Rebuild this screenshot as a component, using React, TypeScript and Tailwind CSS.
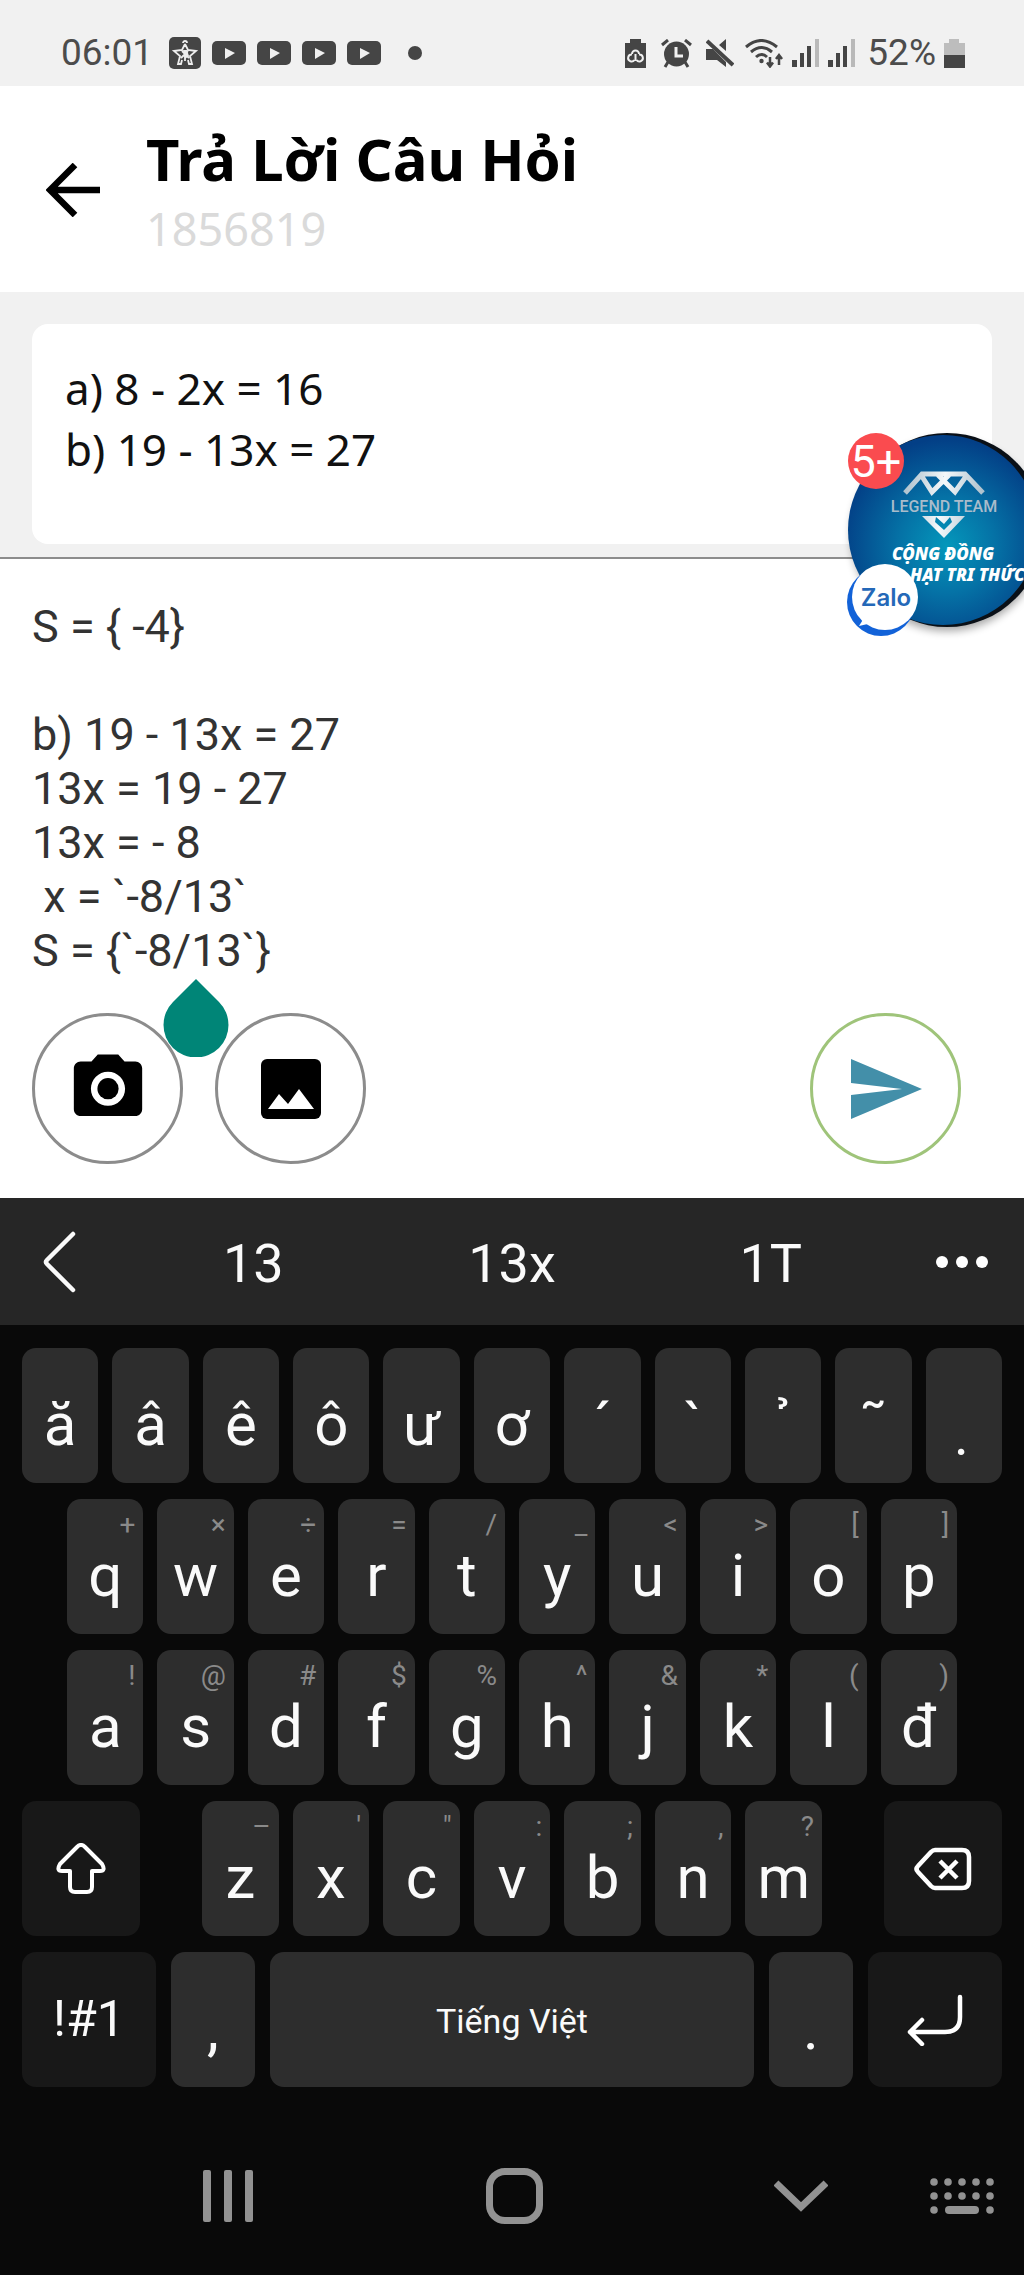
import React from "react";

type KeyDef = { label: string; hint?: string };

const accentKeys: KeyDef[] = [
  { label: "ă" },
  { label: "â" },
  { label: "ê" },
  { label: "ô" },
  { label: "ư" },
  { label: "ơ" },
  { label: "´" },
  { label: "`" },
  { label: "\u00a0\u00a0\u0309" },
  { label: "˜" },
  { label: "\u00a0\u00a0\u0323" },
];

const toKeys = (letters: string, hints: string): KeyDef[] =>
  Array.from(letters).map((label, i) => ({ label, hint: Array.from(hints)[i] }));

const topKeys = toKeys("qwertyuiop", "+×÷=/_<>[]");
const homeKeys = toKeys("asdfghjklđ", "!@#$%^&*()");
const bottomKeys = toKeys("zxcvbnm", "–'\":;,?");

const draft = "S = { -4}\n\nb) 19 - 13x = 27\n13x = 19 - 27\n13x = - 8\n x = `-8/13`\nS = {`-8/13`}";

function Key({ label, hint }: KeyDef) {
  return (
    <button
      type="button"
      className="relative flex h-[135px] min-w-0 flex-1 items-center justify-center rounded-[14px] bg-[#2d2d2d] pt-[18px] text-[60px] leading-none text-[#fafafa]"
    >
      {label}
      {hint && <span className="absolute top-[10px] right-[8px] text-[28px] leading-[32px] text-[#8a8a8a]">{hint}</span>}
    </button>
  );
}

function VideoIcon() {
  return (
    <svg width="34" height="24" viewBox="0 0 34 24" aria-hidden="true">
      <rect width="34" height="24" rx="5" fill="#454545" />
      <path d="M13 7l10 5-10 6z" fill="#f1f1f1" />
    </svg>
  );
}

function SignalIcon() {
  return (
    <svg width="27" height="28" viewBox="0 0 27 28" aria-hidden="true">
      <path d="M0 21h5v7H0zM8 14h4v14H8zM15 7h4v21h-4z" fill="#454545" />
      <path d="M23 0h4v28h-4z" fill="#b9b9b9" />
    </svg>
  );
}

function StatusBar() {
  return (
    <div className="flex h-[86px] items-center justify-between bg-[#f1f1f1] pt-5 pr-[59px] pl-[61px] text-[37px] leading-[44px] text-[#4c4c4c]">
      <div className="flex items-center gap-[11px]">
        <span className="mr-[5px]">06:01</span>
        <svg width="32" height="32" viewBox="0 0 32 32" aria-hidden="true">
          <rect width="32" height="32" rx="5" fill="#454545" />
          <path
            d="M16 7l3 6 8 1-6 5 2 8h-3l-1-4M16 7l-3 6-8 1 6 5-2 8h3l1-4M14 6a2 2 0 1 1 4 0M13 14l3 3 3-3M12 21l4-4 4 4M16 17v7"
            fill="none"
            stroke="#eeeeee"
            strokeWidth="1.8"
          />
          <path d="M14 13h4l2 6-4 3z" fill="#eeeeee" />
        </svg>
        <VideoIcon />
        <VideoIcon />
        <VideoIcon />
        <VideoIcon />
        <span className="ml-[16px] h-[14px] w-[14px] rounded-full bg-[#454545]" />
      </div>
      <div className="flex items-center">
        <svg width="21" height="29" viewBox="0 0 21 29" className="mr-[15px]" aria-hidden="true">
          <path d="M5 0h11v4h5v25H0V4h5z" fill="#454545" />
          <path d="M7 15a3.5 3.5 0 0 1 7 0M14 15.500a3.500 3.500 0 1 1-2.500 5.500M7 15.500a3.500 3.500 0 1 0 2.500 5.500M10.500 15v7" fill="none" stroke="#f1f1f1" strokeWidth="2" />
        </svg>
        <svg width="31" height="29" viewBox="0 0 31 29" className="mr-[14px]" aria-hidden="true">
          <circle cx="15.500" cy="15" r="12.500" fill="#454545" />
          <path d="M1 6l6-5M30 6l-6-5M7 23l-3 5M24 23l3 5" stroke="#454545" strokeWidth="3" />
          <path d="M15 8v9h7" fill="none" stroke="#f1f1f1" strokeWidth="3" />
        </svg>
        <svg width="28" height="29" viewBox="0 0 28 29" className="mr-[11px]" aria-hidden="true">
          <path d="M0 10h7L20 23v5l-9-7H0zM13 6l7-6v12z" fill="#454545" />
          <path d="M1 2l26 24" stroke="#454545" strokeWidth="4" />
        </svg>
        <svg width="39" height="29" viewBox="0 0 39 29" className="mr-[8px]" aria-hidden="true">
          <path d="M1 8q15-13 31 0M6 13q10.500-9 21 0M11 18q5.500-5 11 0" fill="none" stroke="#454545" strokeWidth="3" />
          <circle cx="16.500" cy="22" r="2.200" fill="#454545" />
          <path d="M25 18v9M22 23.500l3 4 3-4M34 26V16M31 20l3-4 3 4" fill="none" stroke="#454545" strokeWidth="2.500" />
        </svg>
        <SignalIcon />
        <span className="w-[9px]" />
        <SignalIcon />
        <span className="mr-[8px] ml-[12px]">52%</span>
        <svg width="21" height="29" viewBox="0 0 21 29" aria-hidden="true">
          <path d="M5 0h10v4h6v12H0V4h5z" fill="#bdbdbd" />
          <path d="M0 16h21v13H0z" fill="#454545" />
        </svg>
      </div>
    </div>
  );
}

function ChatBubble() {
  return (
    <button type="button" aria-label="Zalo" className="absolute top-[420px] right-0 h-[230px] w-[190px] overflow-hidden">
      <svg width="190" height="230" viewBox="834 420 190 230">
        <defs>
          <radialGradient id="sea" cx="0.52" cy="0.58" r="0.56">
            <stop offset="0" stopColor="#0497bb" />
            <stop offset="0.45" stopColor="#0572a6" />
            <stop offset="1" stopColor="#033f86" />
          </radialGradient>
          <linearGradient id="silver" gradientUnits="userSpaceOnUse" x1="902" y1="480" x2="986" y2="490">
            <stop offset="0" stopColor="#a9bdca" />
            <stop offset="0.5" stopColor="#f4f8fa" />
            <stop offset="1" stopColor="#a9bdca" />
          </linearGradient>
          <filter id="shade" x="-20%" y="-20%" width="140%" height="140%">
            <feGaussianBlur stdDeviation="4" />
          </filter>
        </defs>
        <circle cx="947" cy="535" r="96" fill="#000" opacity="0.35" filter="url(#shade)" />
        <circle cx="947" cy="530" r="97" fill="#0a1017" />
        <circle cx="943" cy="530" r="95" fill="url(#sea)" />
        <path d="M905 493l17-19h43l18 19M921 475l11 17 17-17M938 475l17 17 12-17" fill="none" stroke="url(#silver)" strokeWidth="5" />
        <path d="M922 516h43l-21 22zM936 517l-1 5 9 8 8-8-2-5-6 7z" fill="url(#silver)" fillRule="evenodd" />
        <text x="944" y="512" textAnchor="middle" fontFamily="Roboto, sans-serif" fontSize="16" fontWeight="500" fill="#a9bccb">
          LEGEND TEAM
        </text>
        <text x="943" y="560" textAnchor="middle" fontFamily="Noto Sans, sans-serif" fontSize="17" fontWeight="900" fontStyle="italic" fill="#ffffff">
          CỘNG ĐỒNG
        </text>
        <text x="910" y="581" fontFamily="Noto Sans, sans-serif" fontSize="17" fontWeight="900" fontStyle="italic" fill="#ffffff">
          HẠT TRI THỨC
        </text>
        <circle cx="881" cy="602" r="34" fill="#1262d8" />
        <circle cx="885" cy="597" r="33" fill="#ffffff" />
        <path d="M864 618l-5 8 13-3z" fill="#ffffff" />
        <text x="886" y="606" textAnchor="middle" fontFamily="Inter, sans-serif" fontSize="24" fontWeight="600" fill="#2468b8">
          Zalo
        </text>
        <circle cx="876" cy="461" r="28" fill="#fa4b4f" />
        <text x="876" y="477" textAnchor="middle" fontFamily="Roboto, sans-serif" fontSize="45" fill="#ffffff">
          5+
        </text>
      </svg>
    </button>
  );
}

function Composer() {
  return (
    <section className="relative bg-white px-8 pt-[41px] pb-[33px]">
      <textarea
        aria-label="Câu trả lời"
        rows={7}
        spellCheck={false}
        defaultValue={draft}
        className="block w-full resize-none overflow-hidden bg-transparent text-[45px] leading-[54px] text-[#333333] outline-none"
      />
      <svg width="66" height="78" viewBox="0 0 66 78" className="absolute top-[420px] left-[163px]" aria-hidden="true">
        <path d="M33 0L56 23A32.500 32.500 0 1 1 10 23z" fill="#008577" />
      </svg>
      <div className="mt-[35px] mb-px flex items-center">
        <button type="button" aria-label="Chụp ảnh" className="flex h-[151px] w-[151px] items-center justify-center rounded-full border-3 border-[#8c8c8c]">
          <svg width="82" height="82" viewBox="0 0 24 24" className="mb-[4px]">
            <circle cx="12" cy="12.500" r="3.100" />
            <path
              d="M9 2.500L7.170 4.500H4c-1.100 0-2 .9-2 2v12c0 1.100.9 2 2 2h16c1.100 0 2-.9 2-2v-12c0-1.100-.9-2-2-2h-3.170L15 2.500H9zm3 15c-2.760 0-5-2.240-5-5s2.240-5 5-5 5 2.240 5 5-2.240 5-5 5z"
            />
          </svg>
        </button>
        <button type="button" aria-label="Chọn ảnh" className="ml-[32px] flex h-[151px] w-[151px] items-center justify-center rounded-full border-3 border-[#8c8c8c]">
          <svg width="62" height="62" viewBox="0 0 62 62">
            <rect x="1" y="1" width="60" height="60" rx="6" />
            <path d="M8 51l11-15 9 10 11-15 15 20z" fill="#fff" />
          </svg>
        </button>
        <button type="button" aria-label="Gửi" className="mr-[31px] ml-auto flex h-[151px] w-[151px] items-center justify-center rounded-full border-3 border-[#9fc47a]">
          <svg width="72" height="62" viewBox="0 0 72 62">
            <path d="M1 1l71 30L1 61V37l51-6L1 25z" fill="#438fa9" />
          </svg>
        </button>
      </div>
    </section>
  );
}

function Keyboard() {
  return (
    <section className="bg-[#090909]">
      <div className="flex h-[127px] items-center bg-[#262626] text-[54px] text-[#fafafa]">
        <button type="button" aria-label="Quay lại" className="flex w-[124px] justify-center pr-[4px]">
          <svg width="36" height="62" viewBox="0 0 36 62" fill="none" stroke="currentColor" strokeWidth="4.500" strokeLinecap="round">
            <path d="M31 3L5 29q-2 2 0 4l26 26" />
          </svg>
        </button>
        {["13", "13x", "1T"].map((word) => (
          <button key={word} type="button" className="flex-1 pt-[4px] leading-[64px]">
            {word}
          </button>
        ))}
        <button type="button" aria-label="Thêm" className="flex w-[124px] justify-center gap-[8px]">
          <span className="h-3 w-3 rounded-full bg-white" />
          <span className="h-3 w-3 rounded-full bg-white" />
          <span className="h-3 w-3 rounded-full bg-white" />
        </button>
      </div>
      <div className="flex flex-col gap-4 px-[22px] pt-[23px]">
        <div className="flex gap-[14px]">
          {accentKeys.map((k) => (
            <Key key={k.label} label={k.label} />
          ))}
        </div>
        <div className="flex gap-[14px] px-[45px]">
          {topKeys.map((k) => (
            <Key key={k.label} label={k.label} hint={k.hint} />
          ))}
        </div>
        <div className="flex gap-[14px] px-[45px]">
          {homeKeys.map((k) => (
            <Key key={k.label} label={k.label} hint={k.hint} />
          ))}
        </div>
        <div className="grid grid-cols-[118fr_620fr_118fr] gap-[62px]">
          <button type="button" aria-label="Shift" className="flex items-center justify-center rounded-[14px] bg-[#181818] text-white">
            <svg width="50" height="52" viewBox="0 0 50 52" fill="none" stroke="currentColor" strokeWidth="4" strokeLinejoin="round">
              <path d="M21 4q4-4 8 0l17 17q4 7-2 7h-8v16q0 5-5 5H19q-5 0-5-5V28H6q-6 0-2-7z" />
            </svg>
          </button>
          <div className="flex gap-[14px]">
            {bottomKeys.map((k) => (
              <Key key={k.label} label={k.label} hint={k.hint} />
            ))}
          </div>
          <button type="button" aria-label="Xóa" className="flex items-center justify-center rounded-[14px] bg-[#181818] text-white">
            <svg width="58" height="44" viewBox="0 0 58 44" fill="none" stroke="currentColor" strokeWidth="4.500" strokeLinejoin="round">
              <path d="M21 3h27q7 0 7 7v24q0 7-7 7H21q-2 0-4-2L4 25q-3-3 0-6L17 5q2-2 4-2z" />
              <path d="M26 14l17 17M43 14L26 31" />
            </svg>
          </button>
        </div>
        <div className="grid h-[135px] grid-cols-[134fr_84fr_484fr_84fr_134fr] gap-[15px]">
          <button type="button" className="rounded-[14px] bg-[#181818] text-[50px] text-[#fafafa]">
            !#1
          </button>
          <Key label="," />
          <button type="button" className="rounded-[14px] bg-[#2d2d2d] pt-[4px] text-[34px] text-[#fafafa]">
            Tiếng Việt
          </button>
          <Key label="." />
          <button type="button" aria-label="Xuống dòng" className="flex items-center justify-center rounded-[14px] bg-[#181818] text-white">
            <svg width="56" height="52" viewBox="0 0 56 52" fill="none" stroke="currentColor" strokeWidth="4.500" strokeLinecap="round" strokeLinejoin="round">
              <path d="M53 3v20q0 15-15 15H3M15 26L3 38l12 12" />
            </svg>
          </button>
        </div>
      </div>
      <nav className="flex h-[188px] items-center pt-[30px] pr-[30px] pl-[203px] text-[#929292]">
        <div className="flex flex-1 items-center justify-between">
          <button type="button" aria-label="Gần đây">
            <svg width="51" height="52" viewBox="0 0 51 52" fill="currentColor">
              <rect width="8" height="52" rx="2" />
              <rect x="21" width="8" height="52" rx="2" />
              <rect x="42" width="8" height="52" rx="2" />
            </svg>
          </button>
          <button type="button" aria-label="Trang chủ" className="h-[56px] w-[57px] rounded-[19px] border-[7px] border-current" />
          <button type="button" aria-label="Ẩn bàn phím">
            <svg width="54" height="34" viewBox="0 0 54 34" fill="none" stroke="currentColor" strokeWidth="7">
              <path d="M2 4l25 24L52 4" />
            </svg>
          </button>
        </div>
        <button type="button" aria-label="Chọn bàn phím" className="ml-[102px]">
          <svg width="64" height="36" viewBox="0 0 64 36" fill="currentColor">
            {[4, 18, 32, 46, 60].map((x) => (
              <React.Fragment key={x}>
                <circle cx={x} cy="4" r="3.800" />
                <circle cx={x} cy="18" r="3.800" />
              </React.Fragment>
            ))}
            <circle cx="4" cy="32" r="3.800" />
            <circle cx="60" cy="32" r="3.800" />
            <rect x="15" y="28" width="34" height="8" rx="4" />
          </svg>
        </button>
      </nav>
    </section>
  );
}

export default function App() {
  return (
    <main className="relative min-h-screen bg-[#090909] font-['Roboto',sans-serif]">
      <StatusBar />
      <header className="flex items-start bg-white pt-[33px] pb-[28px] pl-[46px] font-['Noto_Sans',sans-serif]">
        <button type="button" aria-label="Trở về" className="flex h-[142px] items-center">
          <svg width="54" height="54" viewBox="0 0 54 54" fill="none" stroke="#000" strokeWidth="6.500">
            <path d="M54 27H5M29 2L4 27l25 25" />
          </svg>
        </button>
        <div className="ml-[46px] pt-[5px]">
          <h1 className="text-[58px] leading-[70px] font-bold text-black">Trả Lời Câu Hỏi</h1>
          <p className="text-[45px] leading-[70px] text-[#dadada]">1856819</p>
        </div>
      </header>
      <section className="border-b-2 border-[#8c8c8c] bg-[#f1f1f1] px-8 pt-8 pb-[13px]">
        <div className="rounded-2xl bg-white px-[33px] pt-[34px] pb-16 font-['Noto_Sans',sans-serif] text-[44px] leading-[61px] text-[#111111]">
          <p>a) 8 - 2x = 16</p>
          <p>b) 19 - 13x = 27</p>
        </div>
      </section>
      <Composer />
      <Keyboard />
      <ChatBubble />
    </main>
  );
}
